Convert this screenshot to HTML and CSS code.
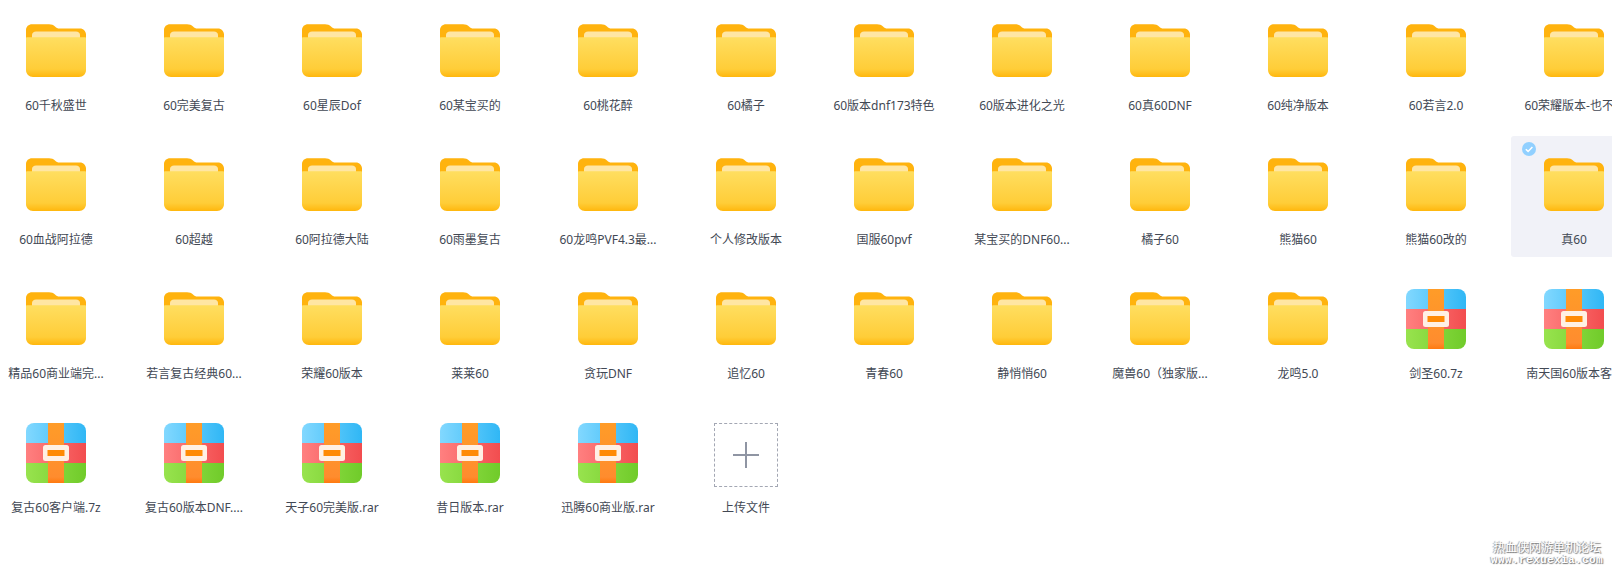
FILE: index.html
```html
<!DOCTYPE html>
<html lang="zh-CN">
<head>
  <meta charset="UTF-8" />
  <title>文件列表</title>
  <link rel="stylesheet" href="styles.css">
</head>
<body>
  <svg class="icon-defs" aria-hidden="true">
    <defs>
      <linearGradient id="folder-front" x1="0" y1="0" x2="0" y2="1">
        <stop offset="0" stop-color="#ffde60"/>
        <stop offset="0.8" stop-color="#ffcd38"/>
        <stop offset="1" stop-color="#ffb70d"/>
      </linearGradient>
      <linearGradient id="pack-blue" x1="0" y1="0" x2="1" y2="0">
        <stop offset="0" stop-color="#82d8ff"/>
        <stop offset="1" stop-color="#30b7f5"/>
      </linearGradient>
      <linearGradient id="pack-red" x1="0" y1="0" x2="1" y2="0">
        <stop offset="0" stop-color="#ff8080"/>
        <stop offset="1" stop-color="#f24d4f"/>
      </linearGradient>
      <linearGradient id="pack-green" x1="0" y1="0" x2="1" y2="0">
        <stop offset="0" stop-color="#98e34e"/>
        <stop offset="1" stop-color="#70cb2a"/>
      </linearGradient>
      <linearGradient id="pack-strap" x1="0" y1="0" x2="0" y2="1">
        <stop offset="0" stop-color="#ff9c28"/>
        <stop offset="0.9" stop-color="#ff8c2e"/>
        <stop offset="1" stop-color="#ff7a10"/>
      </linearGradient>
      <symbol id="folder" viewBox="0 0 60 60">
        <path d="M0 9C0 5.7 2.7 3.3 6 3.3H23C25.5 3.3 27.5 4 29 5.5C30.5 7 31.5 7.6 33.5 7.6H54C57.3 7.6 60 10.3 60 13.6V25H0Z" fill="#ffb30e"/>
        <path d="M6 17V14C6 11.8 7.8 10.4 10 10.4H50C52.2 10.4 54 11.8 54 14V17Z" fill="#ffe6a4"/>
        <path d="M0 17.2C0 16.6 0.5 16.2 1 16.2H59C59.5 16.2 60 16.6 60 17.2V49C60 53 57 56 53 56H7C3 56 0 53 0 49Z" fill="url(#folder-front)"/>
      </symbol>
      <clipPath id="pack-clip">
        <rect width="60" height="60" rx="8"/>
      </clipPath>
      <symbol id="pack" viewBox="0 0 60 60">
        <g clip-path="url(#pack-clip)">
          <rect width="60" height="20" fill="url(#pack-blue)"/>
          <rect y="20" width="60" height="20" fill="url(#pack-red)"/>
          <rect y="40" width="60" height="20" fill="url(#pack-green)"/>
          <rect x="22" width="16" height="60" fill="url(#pack-strap)"/>
        </g>
        <rect x="17" y="22" width="26" height="16" rx="2.5" fill="#fff0e4"/>
        <rect x="21.5" y="27" width="17" height="6" fill="#ff8a05"/>
      </symbol>
    </defs>
  </svg>

  <div class="file-grid">
    <div class="file-item"><svg class="file-icon"><use href="#folder"/></svg><div class="file-name">60千秋盛世</div></div>
    <div class="file-item"><svg class="file-icon"><use href="#folder"/></svg><div class="file-name">60完美复古</div></div>
    <div class="file-item"><svg class="file-icon"><use href="#folder"/></svg><div class="file-name">60星辰Dof</div></div>
    <div class="file-item"><svg class="file-icon"><use href="#folder"/></svg><div class="file-name">60某宝买的</div></div>
    <div class="file-item"><svg class="file-icon"><use href="#folder"/></svg><div class="file-name">60桃花醉</div></div>
    <div class="file-item"><svg class="file-icon"><use href="#folder"/></svg><div class="file-name">60橘子</div></div>
    <div class="file-item"><svg class="file-icon"><use href="#folder"/></svg><div class="file-name">60版本dnf173特色</div></div>
    <div class="file-item"><svg class="file-icon"><use href="#folder"/></svg><div class="file-name">60版本进化之光</div></div>
    <div class="file-item"><svg class="file-icon"><use href="#folder"/></svg><div class="file-name">60真60DNF</div></div>
    <div class="file-item"><svg class="file-icon"><use href="#folder"/></svg><div class="file-name">60纯净版本</div></div>
    <div class="file-item"><svg class="file-icon"><use href="#folder"/></svg><div class="file-name">60若言2.0</div></div>
    <div class="file-item"><svg class="file-icon"><use href="#folder"/></svg><div class="file-name">60荣耀版本-也不...</div></div>

    <div class="file-item"><svg class="file-icon"><use href="#folder"/></svg><div class="file-name">60血战阿拉德</div></div>
    <div class="file-item"><svg class="file-icon"><use href="#folder"/></svg><div class="file-name">60超越</div></div>
    <div class="file-item"><svg class="file-icon"><use href="#folder"/></svg><div class="file-name">60阿拉德大陆</div></div>
    <div class="file-item"><svg class="file-icon"><use href="#folder"/></svg><div class="file-name">60雨墨复古</div></div>
    <div class="file-item"><svg class="file-icon"><use href="#folder"/></svg><div class="file-name">60龙鸣PVF4.3最...</div></div>
    <div class="file-item"><svg class="file-icon"><use href="#folder"/></svg><div class="file-name">个人修改版本</div></div>
    <div class="file-item"><svg class="file-icon"><use href="#folder"/></svg><div class="file-name">国服60pvf</div></div>
    <div class="file-item"><svg class="file-icon"><use href="#folder"/></svg><div class="file-name">某宝买的DNF60...</div></div>
    <div class="file-item"><svg class="file-icon"><use href="#folder"/></svg><div class="file-name">橘子60</div></div>
    <div class="file-item"><svg class="file-icon"><use href="#folder"/></svg><div class="file-name">熊猫60</div></div>
    <div class="file-item"><svg class="file-icon"><use href="#folder"/></svg><div class="file-name">熊猫60改的</div></div>
    <div class="file-item selected">
      <svg class="check-mark" viewBox="0 0 14 14"><circle cx="7" cy="7" r="7" fill="#91d0ff"/><path d="M3.8 7.2L6.1 9.4L10.4 5" fill="none" stroke="#fff" stroke-width="1.5"/></svg>
      <svg class="file-icon"><use href="#folder"/></svg><div class="file-name">真60</div>
    </div>

    <div class="file-item"><svg class="file-icon"><use href="#folder"/></svg><div class="file-name">精品60商业端完...</div></div>
    <div class="file-item"><svg class="file-icon"><use href="#folder"/></svg><div class="file-name">若言复古经典60...</div></div>
    <div class="file-item"><svg class="file-icon"><use href="#folder"/></svg><div class="file-name">荣耀60版本</div></div>
    <div class="file-item"><svg class="file-icon"><use href="#folder"/></svg><div class="file-name">莱莱60</div></div>
    <div class="file-item"><svg class="file-icon"><use href="#folder"/></svg><div class="file-name">贪玩DNF</div></div>
    <div class="file-item"><svg class="file-icon"><use href="#folder"/></svg><div class="file-name">追忆60</div></div>
    <div class="file-item"><svg class="file-icon"><use href="#folder"/></svg><div class="file-name">青春60</div></div>
    <div class="file-item"><svg class="file-icon"><use href="#folder"/></svg><div class="file-name">静悄悄60</div></div>
    <div class="file-item"><svg class="file-icon"><use href="#folder"/></svg><div class="file-name">魔兽60（独家版...</div></div>
    <div class="file-item"><svg class="file-icon"><use href="#folder"/></svg><div class="file-name">龙鸣5.0</div></div>
    <div class="file-item"><svg class="file-icon"><use href="#pack"/></svg><div class="file-name">剑圣60.7z</div></div>
    <div class="file-item"><svg class="file-icon"><use href="#pack"/></svg><div class="file-name">南天国60版本客...</div></div>

    <div class="file-item"><svg class="file-icon"><use href="#pack"/></svg><div class="file-name">复古60客户端.7z</div></div>
    <div class="file-item"><svg class="file-icon"><use href="#pack"/></svg><div class="file-name">复古60版本DNF....</div></div>
    <div class="file-item"><svg class="file-icon"><use href="#pack"/></svg><div class="file-name">天子60完美版.rar</div></div>
    <div class="file-item"><svg class="file-icon"><use href="#pack"/></svg><div class="file-name">昔日版本.rar</div></div>
    <div class="file-item"><svg class="file-icon"><use href="#pack"/></svg><div class="file-name">迅腾60商业版.rar</div></div>
    <div class="file-item">
      <div class="upload-box"><svg class="upload-plus" viewBox="0 0 26 26"><path d="M13 0V26M0 13H26" stroke="#8f95a3" stroke-width="2"/></svg></div>
      <div class="file-name">上传文件</div>
    </div>
  </div>

  <div class="watermark">
    <div class="watermark-cn">热血侠网游单机论坛</div>
    <div class="watermark-en">www.rexuexia.com</div>
  </div>
</body>
</html>
```

FILE: styles.css
```css
html, body {
  margin: 0;
  height: 100%;
  overflow: hidden;
  background: #fff;
}

body {
  font-family: "Noto Sans", "Noto Sans CJK SC", sans-serif;
  color: #424854;
}

.icon-defs { position: absolute; width: 0; height: 0; }

.file-grid {
  display: grid;
  grid-template-columns: repeat(12, 126px);
  grid-auto-rows: 121px;
  gap: 13px 12px;
  margin: 2px 0 0 -7px;
}

.file-item {
  position: relative;
  display: flex;
  flex-direction: column;
  align-items: center;
  padding-top: 19px;
  box-sizing: border-box;
  border-radius: 3px;
}
.file-item.selected { background: #f1f2f8; }

.file-icon { width: 60px; height: 60px; flex: none; }

.file-name {
  margin-top: 16px;
  font-size: 12px;
  line-height: 18px;
  white-space: nowrap;
}

.check-mark {
  position: absolute;
  top: 6px;
  left: 11px;
  width: 14px;
  height: 14px;
}

.upload-box {
  width: 64px;
  height: 64px;
  margin-bottom: -4px;
  box-sizing: border-box;
  border: 1px dashed #a3a7b3;
  display: flex;
  align-items: center;
  justify-content: center;
}
.upload-plus { width: 26px; height: 26px; }

.watermark {
  position: absolute;
  right: 9px;
  bottom: 10px;
  color: #fff;
  text-shadow: 1px 1px 1px #777, -1px 0 1px #999;
  text-align: center;
}
.watermark-cn { font-size: 12px; line-height: 15px; }
.watermark-en {
  font-family: "Liberation Mono", monospace;
  font-size: 11px;
  line-height: 10px;
  font-weight: bold;
  letter-spacing: 0.4px;
}
```
